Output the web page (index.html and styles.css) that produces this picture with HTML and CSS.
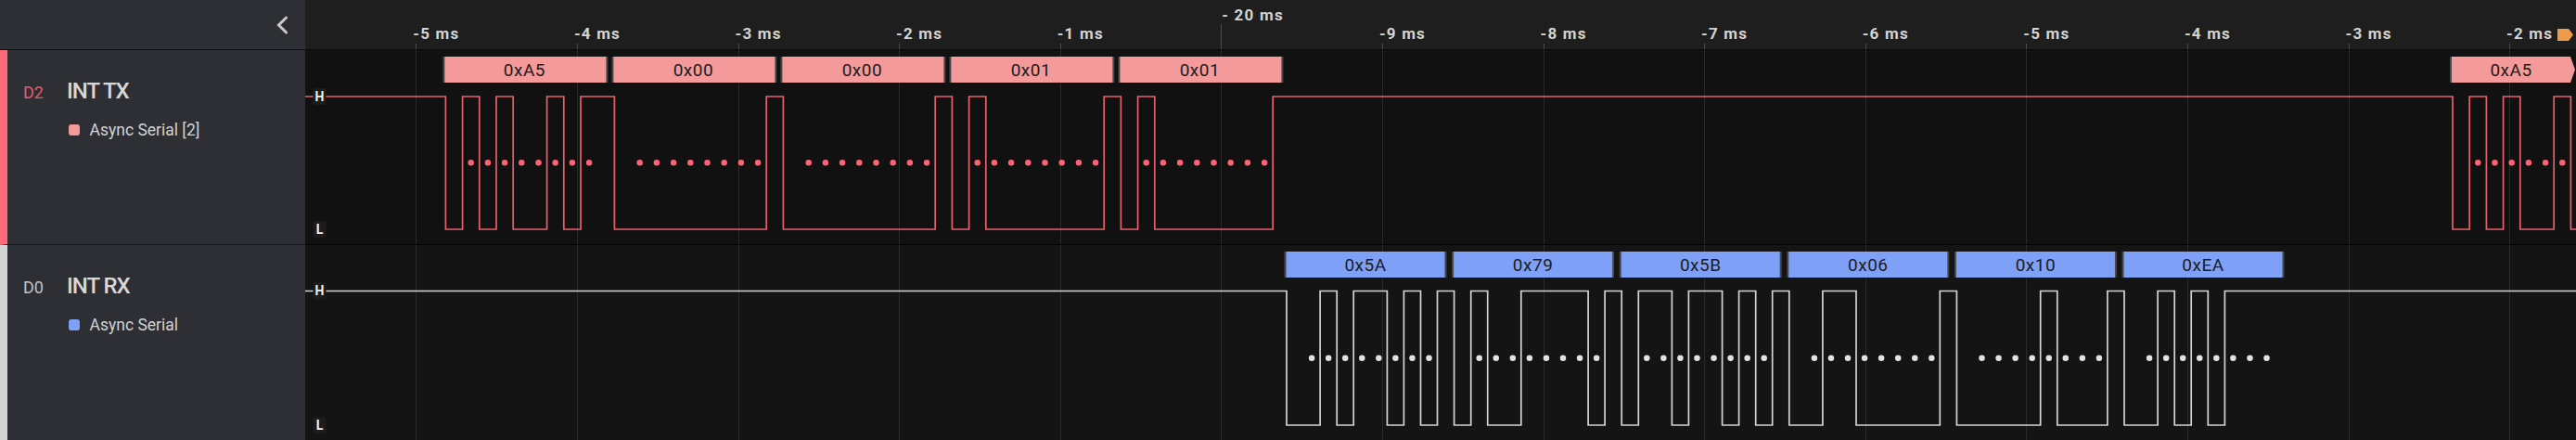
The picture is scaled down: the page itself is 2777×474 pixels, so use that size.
FILE: index.html
```html
<!DOCTYPE html>
<html lang="en">
<head>
<meta charset="utf-8">
<title>Logic capture</title>
<link rel="stylesheet" href="styles.css">
</head>
<body>
<div class="app">
  <aside class="side">
    <div class="side-head">
      <svg class="collapse" width="14" height="20" viewBox="0 0 14 20"><path d="M11.5 2 L3.5 10 L11.5 18"/></svg>
    </div>
    <div class="chan chan-tx">
      <div class="chan-title"><span class="chan-id">D2</span><span class="chan-name">INT TX</span></div>
      <div class="analyzer"><span class="swatch"></span><span>Async Serial [2]</span></div>
    </div>
    <div class="chan chan-rx">
      <div class="chan-title"><span class="chan-id">D0</span><span class="chan-name">INT RX</span></div>
      <div class="analyzer"><span class="swatch"></span><span>Async Serial</span></div>
    </div>
  </aside>
  <main class="main">
    <div class="ruler">
      <svg width="2448" height="53" viewBox="329 0 2448 53">
        <path class="tick-mark" d="M448.5 47V53M622.5 47V53M796.5 47V53M969.5 47V53M1143.5 47V53M1490.5 47V53M1664.5 47V53M1837.5 47V53M2011.5 47V53M2184.5 47V53M2358.5 47V53M2532.5 47V53M2705.5 47V53M1316.5 26V53"/>
        <text class="tick" x="1317.3" y="22">- 20 ms</text>
        <text class="tick" x="445.3" y="42.3">-5 ms</text>
        <text class="tick" x="618.9" y="42.3">-4 ms</text>
        <text class="tick" x="792.5" y="42.3">-3 ms</text>
        <text class="tick" x="966.1" y="42.3">-2 ms</text>
        <text class="tick" x="1139.7" y="42.3">-1 ms</text>
        <text class="tick" x="1486.9" y="42.3">-9 ms</text>
        <text class="tick" x="1660.5" y="42.3">-8 ms</text>
        <text class="tick" x="1834.1" y="42.3">-7 ms</text>
        <text class="tick" x="2007.7" y="42.3">-6 ms</text>
        <text class="tick" x="2181.3" y="42.3">-5 ms</text>
        <text class="tick" x="2354.9" y="42.3">-4 ms</text>
        <text class="tick" x="2528.5" y="42.3">-3 ms</text>
        <text class="tick" x="2702.1" y="42.3">-2 ms</text>
        <polygon class="marker" points="2757,31 2769,31 2774,37.5 2769,44 2757,44"/>
      </svg>
    </div>
    <div class="wave wave-tx">
      <svg width="2448" height="209" viewBox="329 0 2448 209">
        <path class="grid" d="M448.5 0V209M622.5 0V209M796.5 0V209M969.5 0V209M1143.5 0V209M1316.5 0V209M1490.5 0V209M1664.5 0V209M1837.5 0V209M2011.5 0V209M2184.5 0V209M2358.5 0V209M2532.5 0V209M2705.5 0V209"/>
        <path class="sig sig-tx" d="M329,50 H480.4 V193 H498.6 V50 H516.8 V193 H535 V50 H553.2 V193 H589.6 V50 H607.8 V193 H626 V50 H662.4 V193 H826.2 V50 H844.4 V193 H1008.2 V50 H1026.4 V193 H1044.6 V50 H1062.8 V193 H1190.2 V50 H1208.4 V193 H1226.6 V50 H1244.8 V193 H1372.2 V50 H2644 V193 H2662.2 V50 H2680.4 V193 H2698.6 V50 H2716.8 V193 H2753.2 V50 H2771.4 V193 H2780"/>
        <g class="dots dots-tx">
          <line x1="507.7" y1="121.3" x2="635.6" y2="121.3"/>
          <line x1="689.7" y1="121.3" x2="817.6" y2="121.3"/>
          <line x1="871.7" y1="121.3" x2="999.6" y2="121.3"/>
          <line x1="1053.7" y1="121.3" x2="1181.6" y2="121.3"/>
          <line x1="1235.7" y1="121.3" x2="1363.6" y2="121.3"/>
          <line x1="2671.3" y1="121.3" x2="2763" y2="121.3"/>
        </g>
        <g class="frames">
          <rect class="b-edge" x="477.4" y="7" width="178" height="28"/><rect class="b-tx" x="479.4" y="7" width="174" height="28"/><text class="btxt" x="565.4" y="27.7">0xA5</text>
          <rect class="b-edge" x="659.4" y="7" width="178" height="28"/><rect class="b-tx" x="661.4" y="7" width="174" height="28"/><text class="btxt" x="747.4" y="27.7">0x00</text>
          <rect class="b-edge" x="841.4" y="7" width="178" height="28"/><rect class="b-tx" x="843.4" y="7" width="174" height="28"/><text class="btxt" x="929.4" y="27.7">0x00</text>
          <rect class="b-edge" x="1023.4" y="7" width="178" height="28"/><rect class="b-tx" x="1025.4" y="7" width="174" height="28"/><text class="btxt" x="1111.4" y="27.7">0x01</text>
          <rect class="b-edge" x="1205.4" y="7" width="178" height="28"/><rect class="b-tx" x="1207.4" y="7" width="174" height="28"/><text class="btxt" x="1293.4" y="27.7">0x01</text>
          <rect class="b-edge" x="2641" y="7" width="2" height="28"/><polygon class="b-tx" points="2643,7 2771,7 2776,21 2771,35 2643,35"/><text class="btxt" x="2707" y="27.7">0xA5</text>
        </g>
        <g class="lvl">
          <rect class="lvl-bg" x="337.5" y="41" width="14" height="18" rx="2"/><text class="lvl-txt" x="344.5" y="55">H</text>
          <rect class="lvl-bg" x="337.5" y="184.3" width="14" height="18" rx="2"/><text class="lvl-txt" x="344.5" y="198.3">L</text>
        </g>
      </svg>
    </div>
    <div class="wave wave-rx">
      <svg width="2448" height="210" viewBox="329 0 2448 210">
        <path class="grid" d="M448.5 0V210M622.5 0V210M796.5 0V210M969.5 0V210M1143.5 0V210M1316.5 0V210M1490.5 0V210M1664.5 0V210M1837.5 0V210M2011.5 0V210M2184.5 0V210M2358.5 0V210M2532.5 0V210M2705.5 0V210"/>
        <path class="sig sig-rx" d="M329,49.5 H1387 V194 H1423.1 V49.5 H1441.2 V194 H1459.2 V49.5 H1495.4 V194 H1513.4 V49.5 H1531.5 V194 H1549.5 V49.5 H1567.6 V194 H1585.7 V49.5 H1603.7 V194 H1639.8 V49.5 H1712.1 V194 H1730.1 V49.5 H1748.2 V194 H1766.3 V49.5 H1802.4 V194 H1820.4 V49.5 H1856.6 V194 H1874.6 V49.5 H1892.7 V194 H1910.7 V49.5 H1928.8 V194 H1964.9 V49.5 H2001 V194 H2091.3 V49.5 H2109.4 V194 H2199.7 V49.5 H2217.8 V194 H2271.9 V49.5 H2290 V194 H2326.1 V49.5 H2344.2 V194 H2362.2 V49.5 H2380.3 V194 H2398.4 V49.5 H2780"/>
        <g class="dots dots-rx">
          <line x1="1414.1" y1="121.7" x2="1541" y2="121.7"/>
          <line x1="1594.7" y1="121.7" x2="1721.6" y2="121.7"/>
          <line x1="1775.3" y1="121.7" x2="1902.2" y2="121.7"/>
          <line x1="1955.9" y1="121.7" x2="2082.8" y2="121.7"/>
          <line x1="2136.5" y1="121.7" x2="2263.4" y2="121.7"/>
          <line x1="2317.1" y1="121.7" x2="2444" y2="121.7"/>
        </g>
        <g class="frames">
          <rect class="b-edge" x="1384.5" y="7" width="175" height="28"/><rect class="b-rx" x="1386.5" y="7" width="171" height="28"/><text class="btxt" x="1472" y="27.7">0x5A</text>
          <rect class="b-edge" x="1565.1" y="7" width="175" height="28"/><rect class="b-rx" x="1567.1" y="7" width="171" height="28"/><text class="btxt" x="1652.6" y="27.7">0x79</text>
          <rect class="b-edge" x="1745.7" y="7" width="175" height="28"/><rect class="b-rx" x="1747.7" y="7" width="171" height="28"/><text class="btxt" x="1833.2" y="27.7">0x5B</text>
          <rect class="b-edge" x="1926.3" y="7" width="175" height="28"/><rect class="b-rx" x="1928.3" y="7" width="171" height="28"/><text class="btxt" x="2013.8" y="27.7">0x06</text>
          <rect class="b-edge" x="2106.9" y="7" width="175" height="28"/><rect class="b-rx" x="2108.9" y="7" width="171" height="28"/><text class="btxt" x="2194.4" y="27.7">0x10</text>
          <rect class="b-edge" x="2287.5" y="7" width="175" height="28"/><rect class="b-rx" x="2289.5" y="7" width="171" height="28"/><text class="btxt" x="2375" y="27.7">0xEA</text>
        </g>
        <g class="lvl">
          <rect class="lvl-bg" x="337.5" y="40.3" width="14" height="18" rx="2"/><text class="lvl-txt" x="344.5" y="54.3">H</text>
          <rect class="lvl-bg" x="337.5" y="185.3" width="14" height="18" rx="2"/><text class="lvl-txt" x="344.5" y="199.3">L</text>
        </g>
      </svg>
    </div>
  </main>
</div>
</body>
</html>
```

FILE: styles.css
```css
* { box-sizing: border-box; }

html, body {
  margin: 0;
  padding: 0;
  background: #111111;
}

body {
  width: 2777px;
  height: 474px;
  overflow: hidden;
  font-family: Roboto, "Noto Sans", "Liberation Sans", sans-serif;
}

.app {
  display: grid;
  grid-template-columns: 329px 2448px;
  height: 474px;
}

/* ---------- sidebar ---------- */
.side {
  background: #2e2f35;
  display: flex;
  flex-direction: column;
}

.side-head {
  height: 54px;
  border-bottom: 1px solid #0e0e10;
  display: flex;
  align-items: center;
  justify-content: flex-end;
  padding-right: 18px;
}

.collapse { display: block; }
.collapse path {
  fill: none;
  stroke: #c9c9c9;
  stroke-width: 3;
  stroke-linecap: round;
  stroke-linejoin: miter;
}

.chan {
  height: 210px;
  border-left: 8px solid #ff6b7b;
  border-bottom: 1px solid #1b1b1f;
  padding: 29.5px 0 0 17px;
}

.chan-rx {
  border-left-color: #d5d5d5;
  border-bottom: none;
}

.chan-title {
  display: flex;
  align-items: baseline;
  height: 28px;
  line-height: 28px;
}

.chan-id {
  width: 47px;
  font-size: 18px;
  color: #e35c6c;
}

.chan-rx .chan-id { color: #c2c2c2; }

.chan-name {
  font-size: 24px;
  font-weight: 500;
  color: #d8d8d8;
  letter-spacing: -1px;
}

.analyzer {
  display: flex;
  align-items: center;
  gap: 10.5px;
  height: 20px;
  line-height: 20px;
  margin: 18.5px 0 0 49px;
  font-size: 17.5px;
  color: #d2d2d2;
}

.swatch {
  width: 12px;
  height: 12px;
  border-radius: 3px;
  background: #f59a9b;
}

.chan-rx .swatch { background: #7fa0f7; }

/* ---------- main area ---------- */
.main {
  display: flex;
  flex-direction: column;
}

.main svg { display: block; }

.ruler {
  height: 54px;
  background: #1e1e1e;
  border-bottom: 1px solid #0a0a0a;
}

.tick-mark {
  stroke: #4c4c4c;
  stroke-width: 1;
  fill: none;
}

.tick {
  font-family: Roboto, "Liberation Sans", sans-serif;
  font-weight: 700;
  font-size: 17px;
  letter-spacing: 1.2px;
  fill: #d4d4d4;
}

.marker { fill: #f09b4a; }

.wave { height: 210px; }

.wave-tx {
  background: #111111;
  border-bottom: 1px solid #050505;
}

.wave-rx { background: #141414; }

.grid {
  stroke: #2a2a2a;
  stroke-width: 1;
  fill: none;
}

.sig {
  fill: none;
  stroke-width: 1.7;
}

.sig-tx { stroke: #e8606e; }
.sig-rx { stroke: #d4d4d4; }

.dots line {
  fill: none;
  stroke-width: 6.5;
  stroke-linecap: round;
}

.dots-tx line { stroke: #ff6274; stroke-dasharray: 0 18.2; }
.dots-rx line { stroke: #e2e2e2; stroke-dasharray: 0 18.06; }

.b-edge { fill: #474747; }
.b-tx { fill: #f59a9b; }
.b-rx { fill: #7fa0f7; }

.btxt {
  font-family: Roboto, "Liberation Sans", sans-serif;
  font-weight: 400;
  font-size: 19px;
  letter-spacing: 0.5px;
  fill: #1c1c1c;
  text-anchor: middle;
}

.lvl-bg { fill: #1c1c1c; }

.lvl-txt {
  font-family: Roboto, "Liberation Sans", sans-serif;
  font-weight: 700;
  font-size: 14px;
  fill: #f0f0f0;
  text-anchor: middle;
}
```
